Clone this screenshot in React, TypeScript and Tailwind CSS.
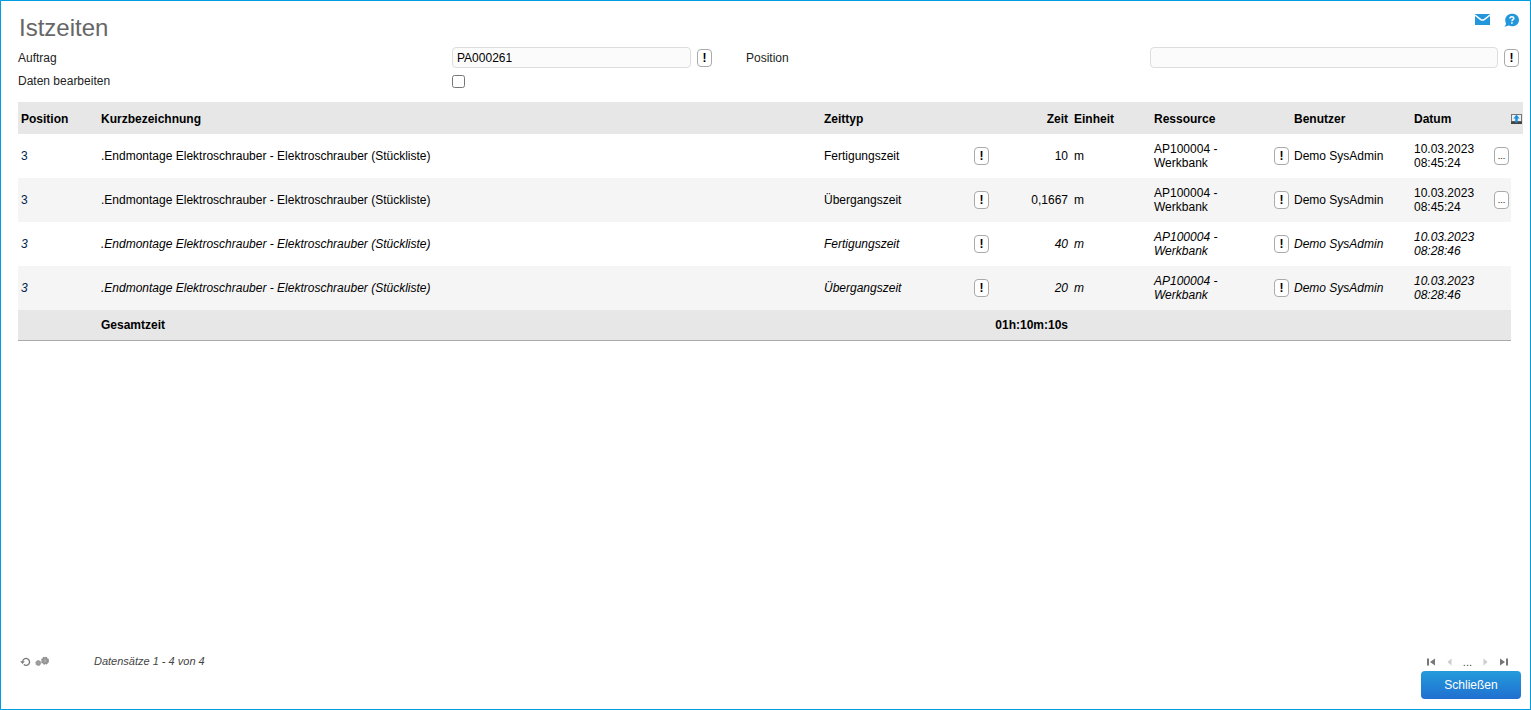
import { useState } from "react";

type TimeEntry = {
  id: number;
  position: string;
  name: string;
  timeType: string;
  time: string;
  unit: string;
  resource: string[];
  user: string;
  date: string;
  clock: string;
  locked: boolean;
};

const PART_NAME = ".Endmontage Elektroschrauber - Elektroschrauber (Stückliste)";
const RESOURCE = ["AP100004 -", "Werkbank"];

const entries: TimeEntry[] = [
  { id: 1, position: "3", name: PART_NAME, timeType: "Fertigungszeit", time: "10", unit: "m", resource: RESOURCE, user: "Demo SysAdmin", date: "10.03.2023", clock: "08:45:24", locked: false },
  { id: 2, position: "3", name: PART_NAME, timeType: "Übergangszeit", time: "0,1667", unit: "m", resource: RESOURCE, user: "Demo SysAdmin", date: "10.03.2023", clock: "08:45:24", locked: false },
  { id: 3, position: "3", name: PART_NAME, timeType: "Fertigungszeit", time: "40", unit: "m", resource: RESOURCE, user: "Demo SysAdmin", date: "10.03.2023", clock: "08:28:46", locked: true },
  { id: 4, position: "3", name: PART_NAME, timeType: "Übergangszeit", time: "20", unit: "m", resource: RESOURCE, user: "Demo SysAdmin", date: "10.03.2023", clock: "08:28:46", locked: true },
];

export default function App() {
  const [order, setOrder] = useState("PA000261");
  const [position, setPosition] = useState("");
  const [editing, setEditing] = useState(false);

  return (
    <main className="flex min-h-screen flex-col border border-[#009ee0] bg-white pt-3 pr-[7px] pb-[10px] pl-[17px] font-['Liberation_Sans',Arial,sans-serif] text-xs text-black">
      <header className="flex items-start justify-between pr-1 pl-px">
        <h1 className="pt-px text-2xl leading-7 text-[#666]">Istzeiten</h1>
        <div className="flex gap-[14px]">
          <button type="button" aria-label="Nachricht senden">
            <MailIcon />
          </button>
          <button type="button" aria-label="Hilfe">
            <HelpIcon />
          </button>
        </div>
      </header>

      <form className="mt-1 grid grid-cols-[434fr_294fr_404fr_373fr] items-center text-[#222]">
        <label htmlFor="order">Auftrag</label>
        <div className="flex h-[23px] items-center gap-[6px] pr-[34px]">
          <input
            id="order"
            type="text"
            value={order}
            onChange={(event) => setOrder(event.target.value)}
            className="h-[21px] min-w-0 flex-1 rounded-[4px] border border-[#ddd] bg-[#fbfbfb] px-1 text-black focus:outline-none"
          />
          <InfoButton label="Auftrag anzeigen" />
        </div>
        <label htmlFor="position">Position</label>
        <div className="flex h-[23px] items-center gap-[6px] pr-1">
          <input
            id="position"
            type="text"
            value={position}
            onChange={(event) => setPosition(event.target.value)}
            className="h-[21px] min-w-0 flex-1 rounded-[4px] border border-[#ddd] bg-[#fbfbfb] px-1 text-black focus:outline-none"
          />
          <InfoButton label="Position anzeigen" />
        </div>
        <label htmlFor="editing">Daten bearbeiten</label>
        <div className="flex h-6 items-center">
          <input
            id="editing"
            type="checkbox"
            checked={editing}
            onChange={(event) => setEditing(event.target.checked)}
            className="size-[13px]"
          />
        </div>
      </form>

      <table className="mt-[9px] w-full table-fixed border-collapse text-left leading-[14px]">
        <colgroup>
          <col className="w-[80px]" />
          <col />
          <col className="w-[150px]" />
          <col className="w-[20px]" />
          <col className="w-[80px]" />
          <col className="w-[80px]" />
          <col className="w-[120px]" />
          <col className="w-[20px]" />
          <col className="w-[120px]" />
          <col className="w-[80px]" />
          <col className="w-[20px]" />
          <col className="w-[12px]" />
        </colgroup>
        <thead>
          <tr className="h-8 bg-[#e7e7e7]">
            <th className="px-[3px] pt-[2px]">Position</th>
            <th className="px-[3px] pt-[2px]">Kurzbezeichnung</th>
            <th className="px-[3px] pt-[2px]" colSpan={2}>Zeittyp</th>
            <th className="px-[3px] pt-[2px] text-right">Zeit</th>
            <th className="px-[3px] pt-[2px]">Einheit</th>
            <th className="px-[3px] pt-[2px]" colSpan={2}>Ressource</th>
            <th className="px-[3px] pt-[2px]">Benutzer</th>
            <th className="px-[3px] pt-[2px]" colSpan={2}>Datum</th>
            <th className="pt-[2px]">
              <button type="button" aria-label="Exportieren" className="block">
                <ExportIcon />
              </button>
            </th>
          </tr>
        </thead>
        <tbody>
          {entries.map((entry) => (
            <EntryRow key={entry.id} entry={entry} />
          ))}
        </tbody>
        <tfoot>
          <tr className="h-[30px] bg-[#e7e7e7] font-bold">
            <td className="border-b border-[#aaa]" />
            <td className="border-b border-[#aaa] px-[3px]">Gesamtzeit</td>
            <td className="border-b border-[#aaa] px-[3px] text-right" colSpan={3}>01h:10m:10s</td>
            <td className="border-b border-[#aaa]" colSpan={6} />
          </tr>
        </tfoot>
      </table>

      <footer className="mt-auto">
        <div className="flex h-5 items-center justify-between pr-[14px] pl-[2px] text-[11px] text-[#444]">
          <div className="flex items-center">
            <button type="button" aria-label="Aktualisieren">
              <RefreshIcon />
            </button>
            <button type="button" aria-label="Einstellungen" className="ml-1">
              <GearsIcon />
            </button>
            <span className="ml-[45px] italic">Datensätze 1 - 4 von 4</span>
          </div>
          <nav aria-label="Seiten" className="flex items-center pt-[2px]">
            <button type="button" aria-label="Erste Seite" className="text-[#777]">
              <svg className="block" width="10" height="8" viewBox="0 0 10 8" fill="currentColor">
                <path d="M1 0.500h2v7H1zM9 0.500v7L4 4z" />
              </svg>
            </button>
            <button type="button" aria-label="Vorherige Seite" className="ml-[11px] text-[#ccc]">
              <svg className="block" width="5" height="8" viewBox="0 0 5 8" fill="currentColor">
                <path d="M4.500 0.500v7L0.500 4z" />
              </svg>
            </button>
            <span className="mx-[11px]">...</span>
            <button type="button" aria-label="Nächste Seite" className="text-[#ccc]">
              <svg className="block" width="5" height="8" viewBox="0 0 5 8" fill="currentColor">
                <path d="M0.500 0.500v7L4.500 4z" />
              </svg>
            </button>
            <button type="button" aria-label="Letzte Seite" className="ml-[11px] text-[#777]">
              <svg className="block" width="10" height="8" viewBox="0 0 10 8" fill="currentColor">
                <path d="M1 0.500v7L6 4zM7 0.500h2v7H7z" />
              </svg>
            </button>
          </nav>
        </div>
        <div className="flex justify-end pr-[2px]">
          <button
            type="button"
            className="h-7 w-[100px] rounded-[4px] bg-linear-to-b from-[#259bdb] to-[#216fd0] text-white"
          >
            Schließen
          </button>
        </div>
      </footer>
    </main>
  );
}

function EntryRow({ entry }: { entry: TimeEntry }) {
  return (
    <tr className={entry.locked ? "h-11 italic even:bg-[#f5f5f5]" : "h-11 even:bg-[#f5f5f5]"}>
      <td className="px-[3px] text-[#00254a]">{entry.position}</td>
      <td className="px-[3px]">{entry.name}</td>
      <td className="px-[3px]">{entry.timeType}</td>
      <td className="pl-[3px]">
        <InfoButton label="Zeittyp anzeigen" />
      </td>
      <td className="px-[3px] text-right">{entry.time}</td>
      <td className="px-[3px]">{entry.unit}</td>
      <td className="px-[3px]">
        {entry.resource[0]}
        <br />
        {entry.resource[1]}
      </td>
      <td className="pl-[3px]">
        <InfoButton label="Ressource anzeigen" />
      </td>
      <td className="px-[3px]">{entry.user}</td>
      <td className="px-[3px]">
        {entry.date}
        <br />
        {entry.clock}
      </td>
      <td className="pl-[3px]">
        {entry.locked ? null : (
          <button
            type="button"
            aria-label="Weitere Aktionen"
            className="flex h-[18px] w-[15px] items-center justify-center rounded-[4px] border border-[#aaa] bg-white text-[9px]"
          >
            ...
          </button>
        )}
      </td>
    </tr>
  );
}

function InfoButton({ label }: { label: string }) {
  return (
    <button
      type="button"
      aria-label={label}
      className="flex h-[18px] w-[15px] shrink-0 items-center justify-center rounded-[4px] border border-[#aaa] bg-white text-xs font-bold text-black not-italic"
    >
      !
    </button>
  );
}

function MailIcon() {
  return (
    <svg className="block" width="15" height="15" viewBox="0 0 15 15">
      <path d="M0 1h15v11H0z" fill="#2497dc" />
      <path d="M0 2L5.500 6.300Q7.500 7.800 9.500 6.300L15 2" fill="none" stroke="#fff" strokeWidth="1.500" />
    </svg>
  );
}

function HelpIcon() {
  return (
    <svg className="block" width="15" height="15" viewBox="0 0 15 15">
      <path d="M8.300 0.800C12.200 0.800 15 3.400 15 7s-2.800 6.300-6.700 6.300c-1.300 0-2.400-.2-3.400-.7L0.300 13.800c1-1 1.500-2.200 1.700-3.400C1.500 9.400 1.200 8.300 1.200 7.200 1.200 3.500 4.300 0.800 8.300 0.800z" fill="#2497dc" />
      <path d="M6 5.400c0-2.300 3.800-2.300 3.800-.1C9.800 6.700 7.900 6.500 7.900 8.300" fill="none" stroke="#fff" strokeWidth="1.500" />
      <path d="M7.100 9.200h1.600v1.500H7.100z" fill="#fff" />
    </svg>
  );
}

function ExportIcon() {
  return (
    <svg className="block" width="11" height="10" viewBox="0 0 11 10">
      <path d="M0 0h11v10H0z" fill="#777" />
      <path d="M1 1h9v6H1z" fill="#eee" />
      <path d="M0 7.500h11V10H0z" fill="#444" />
      <path d="M4.300 8.500V4.500H2.500L5.500 0.500l3 4H6.700v4z" fill="#168fdc" />
    </svg>
  );
}

function RefreshIcon() {
  return (
    <svg className="block" width="11" height="12" viewBox="0 0 11 12">
      <path d="M2.600 6.500a3.500 3.500 0 1 1 1.200 3.100" fill="none" stroke="#777" strokeWidth="1.300" />
      <path d="M0.200 6.200h4.600L2.500 8.900z" fill="#777" />
    </svg>
  );
}

function GearsIcon() {
  return (
    <svg className="block" width="14" height="12" viewBox="0 0 14 12">
      <circle cx="3.300" cy="8" r="2.500" fill="#999" stroke="#999" strokeWidth="1" strokeDasharray="1.200 0.700" />
      <circle cx="10" cy="5.700" r="3.300" fill="#999" stroke="#888" strokeWidth="1.400" strokeDasharray="1.700 0.900" />
      <circle cx="3.300" cy="8" r="0.800" fill="#aaa" />
      <circle cx="10" cy="5.700" r="1.300" fill="#aaa" />
    </svg>
  );
}
